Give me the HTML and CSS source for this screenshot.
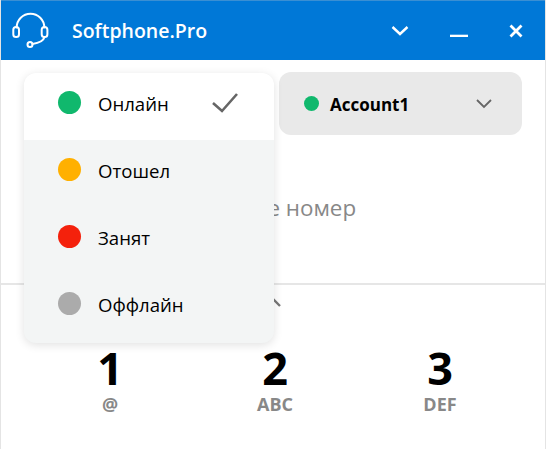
FILE: index.html
```html
<!DOCTYPE html>
<html lang="ru">
<head>
<meta charset="utf-8">
<title>Softphone.Pro</title>
<link rel="stylesheet" href="styles.css">
</head>
<body>
<div class="app">
  <header class="titlebar">
    <svg class="logo" width="40" height="40" viewBox="0 0 40 40" fill="none" stroke="#fff" stroke-width="2" stroke-linecap="round">
      <path d="M7.700 16.500a13.800 13.800 0 0 1 27.600 0"/>
      <rect x="4.300" y="16" width="5.700" height="10" rx="2.850"/>
      <rect x="32.700" y="16" width="5.700" height="10" rx="2.850"/>
      <path d="M35.500 26c-1 4-5.500 6-12 7"/>
      <circle cx="21" cy="33.500" r="2.500"/>
    </svg>
    <span class="brand">Softphone.Pro</span>
    <div class="controls">
      <svg width="18" height="12" viewBox="0 0 18 12" fill="none" stroke="#fff" stroke-width="2.400"><path d="M1.500 2 9 9l7.500-7"/></svg>
      <svg width="18" height="12" viewBox="0 0 18 12" fill="none" stroke="#fff" stroke-width="2.600"><path d="M0 11h18"/></svg>
      <svg width="14" height="14" viewBox="0 0 14 14" fill="none" stroke="#fff" stroke-width="2.800"><path d="M1.500 1.500l11 11M12.500 1.500l-11 11"/></svg>
    </div>
  </header>

  <main class="content">
    <div class="top-row">
      <div class="account">
        <span class="dot dot-small online"></span>
        <span class="account-name">Account1</span>
        <svg class="account-chevron" width="16" height="10" viewBox="0 0 16 10" fill="none" stroke="#666" stroke-width="1.800"><path d="M1 1l7 7 7-7"/></svg>
      </div>
    </div>
    <div class="number">Введите номер</div>
    <div class="divider">
      <svg class="collapse" width="16" height="10" viewBox="0 0 16 10" fill="none" stroke="#777" stroke-width="2.400"><path d="M1 9l7-7 7 7"/></svg>
    </div>
    <div class="keypad">
      <div class="key"><span class="digit">1</span><span class="letters">@</span></div>
      <div class="key"><span class="digit">2</span><span class="letters">ABC</span></div>
      <div class="key"><span class="digit">3</span><span class="letters">DEF</span></div>
    </div>
  </main>

  <div class="menu">
    <div class="item active">
      <span class="dot online"></span><span class="label">Онлайн</span>
      <svg class="check" width="28" height="24" viewBox="0 0 28 24" fill="none" stroke="#666" stroke-width="2.600"><path d="M2 13l9 8L26 4"/></svg>
    </div>
    <div class="item"><span class="dot away"></span><span class="label">Отошел</span></div>
    <div class="item"><span class="dot busy"></span><span class="label">Занят</span></div>
    <div class="item"><span class="dot offline"></span><span class="label">Оффлайн</span></div>
  </div>
</div>
</body>
</html>
```
FILE: styles.css
```css
* { box-sizing: border-box; }
html, body { margin: 0; padding: 0; background: #fff; }
body { font-family: "Open Sans", "Noto Sans", sans-serif; }
.app {
  position: relative;
  width: 546px;
  height: 449px;
  overflow: hidden;
  background: #fff;
  border-left: 1px solid #e4e4e4;
  border-right: 1px solid #e4e4e4;
}
.titlebar {
  height: 60px;
  margin: 0 -1px;
  background: #0078d7;
  border-top: 1px solid #3a8fd3;
  display: flex;
  align-items: center;
  padding: 0 23px 0 9px;
  color: #fff;
}
.logo { flex: none; }
.brand { margin-left: 23px; font-size: 19.500px; font-weight: 600; }
.controls { margin-left: auto; display: flex; align-items: center; gap: 41px; }
.content { display: flex; flex-direction: column; }
.top-row { display: flex; justify-content: flex-end; padding: 12px 23px 0 0; }
.account {
  width: 243px;
  height: 63px;
  background: #e9e9e9;
  border-radius: 12px;
  display: flex;
  align-items: center;
  padding: 0 29px 0 25px;
}
.account-name { margin-left: 11px; font-size: 17px; font-weight: 700; color: #000; margin-top: 2px; }
.account-chevron { margin-left: auto; margin-right: 1px; }
.number {
  height: 148px;
  padding-top: 59px;
  text-align: center;
  font-size: 22.400px;
  line-height: 28px;
  color: #888;
}
.divider { position: relative; height: 2px; background: #e6e6e6; }
.collapse { position: absolute; left: 264px; top: 14px; }
.keypad { display: grid; grid-template-columns: repeat(3, 165px); justify-content: center; padding: 60px 0 0 4px; }
.key { display: flex; flex-direction: column; align-items: center; }
.digit { font-size: 45px; line-height: 45px; font-weight: 700; color: #000; }
.letters { font-size: 18px; line-height: 22px; margin-top: 3px; font-weight: 700; color: #888; }
.menu {
  position: absolute;
  left: 23px;
  top: 73px;
  width: 250px;
  height: 270px;
  background: #f3f5f5;
  border-radius: 12px;
  overflow: hidden;
  box-shadow: 0 2px 10px rgba(0,0,0,.12);
  display: flex;
  flex-direction: column;
}
.item {
  height: 67px;
  flex: none;
  display: flex;
  align-items: center;
  padding-left: 34px;
  position: relative;
}
.item.active { background: #fff; }
.label { margin-left: 17px; font-size: 18.600px; color: #000; margin-top: -6px; }
.dot { width: 23px; height: 23px; border-radius: 50%; flex: none; margin-top: -9px; }
.dot-small { width: 15px; height: 15px; margin-top: 0; }
.online { background: #10b86d; }
.away { background: #ffb000; }
.busy { background: #f4210c; }
.offline { background: #ababab; }
.check { position: absolute; left: 187px; top: 17px; }
```
